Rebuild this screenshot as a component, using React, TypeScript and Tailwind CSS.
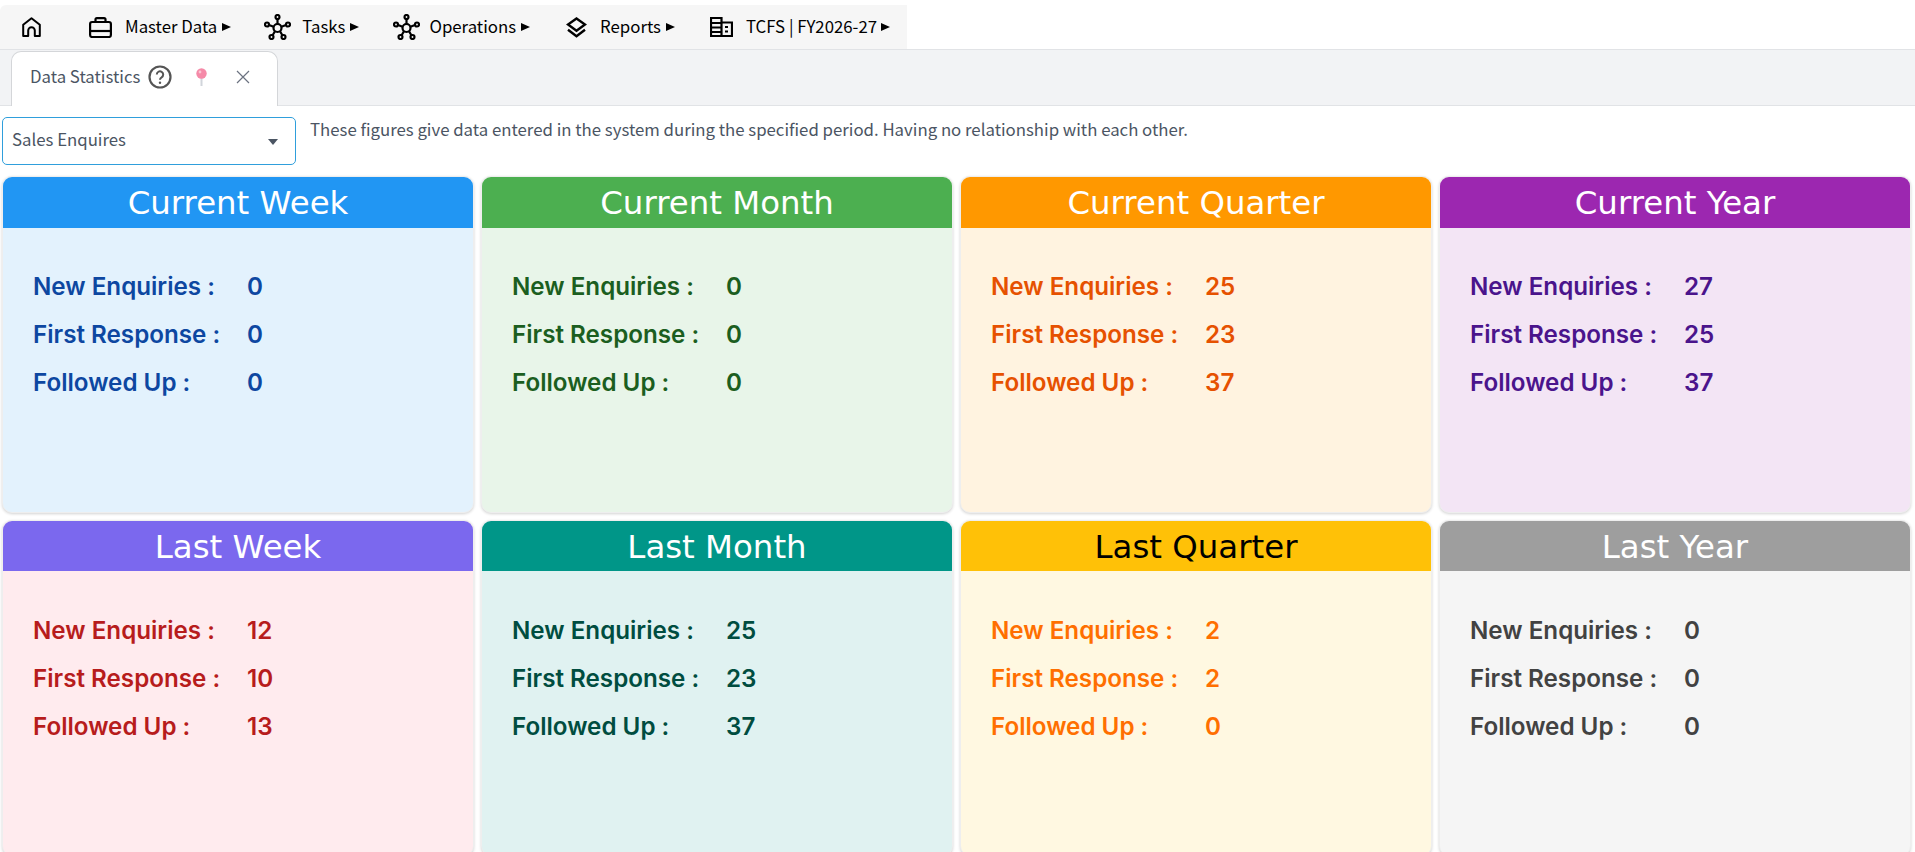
const navItems = [
  { label: "Master Data", icon: "case", left: "ml-[48px]", gap: "gap-[13px]", after: "ml-[5px]" },
  { label: "Tasks", icon: "hub", left: "ml-[33px]", gap: "gap-[11px]", after: "ml-[5px]" },
  { label: "Operations", icon: "hub", left: "ml-[34px]", gap: "gap-[9px]", after: "ml-[5px]" },
  { label: "Reports", icon: "layers", left: "ml-[36px]", gap: "gap-[13px]", after: "ml-[5px]" },
  { label: "TCFS | FY2026-27", icon: "building", left: "ml-[35px]", gap: "gap-[13px]", after: "ml-[4px]" },
];

const cards = [
  { title: "Current Week", head: "bg-[#2196f3]", titleText: "text-white", body: "bg-[#e3f2fd]", text: "text-[#0d47a1]", values: [0, 0, 0] },
  { title: "Current Month", head: "bg-[#4caf50]", titleText: "text-white", body: "bg-[#e8f5e9]", text: "text-[#1b5e20]", values: [0, 0, 0] },
  { title: "Current Quarter", head: "bg-[#ff9800]", titleText: "text-white", body: "bg-[#fff3e0]", text: "text-[#e65100]", values: [25, 23, 37] },
  { title: "Current Year", head: "bg-[#9c27b0]", titleText: "text-white", body: "bg-[#f3e5f5]", text: "text-[#4a148c]", values: [27, 25, 37] },
  { title: "Last Week", head: "bg-[#7b68ee]", titleText: "text-white", body: "bg-[#ffebee]", text: "text-[#b71c1c]", values: [12, 10, 13] },
  { title: "Last Month", head: "bg-[#009688]", titleText: "text-white", body: "bg-[#e0f2f1]", text: "text-[#004d40]", values: [25, 23, 37] },
  { title: "Last Quarter", head: "bg-[#ffc107]", titleText: "text-black", body: "bg-[#fff8e1]", text: "text-[#ff6f00]", values: [2, 2, 0] },
  { title: "Last Year", head: "bg-[#9e9e9e]", titleText: "text-white", body: "bg-[#f5f5f5]", text: "text-[#424242]", values: [0, 0, 0] },
];

const rowLabels = ["New Enquiries :", "First Response :", "Followed Up :"];

function NavIcon({ name }: { name: string }) {
  if (name === "case") {
    return (
      <svg width="23" height="21" viewBox="0 0 23 21" fill="none" stroke="#000" strokeWidth="2.2" className="block">
        <rect x="1.100" y="5" width="20.800" height="15" rx="2" />
        <path d="M6.500 5V2.500a1.400 1.400 0 0 1 1.400-1.400h7.200a1.400 1.400 0 0 1 1.400 1.400V5" />
        <path d="M1.100 14h20.800" />
      </svg>
    );
  }
  if (name === "hub") {
    return (
      <svg width="27" height="26" viewBox="0 0 27 26" fill="none" stroke="#000" strokeWidth="2.200" className="block">
        <circle cx="13.500" cy="14" r="4" />
        <circle cx="13.500" cy="3" r="2" />
        <circle cx="3" cy="10.500" r="2" />
        <circle cx="24" cy="10.500" r="2" />
        <circle cx="7.500" cy="23" r="2" />
        <circle cx="19.500" cy="23" r="2" />
        <path d="M13.500 5V10M5 11 9.600 12.800M22 11 17.400 12.800M8.600 21.300 11 17.300M18.400 21.300 16 17.300" />
      </svg>
    );
  }
  if (name === "layers") {
    return (
      <svg width="21" height="21" viewBox="0 0 21 21" fill="none" stroke="#000" strokeWidth="2.400" strokeLinejoin="miter" className="block">
        <path d="M10.500 1.500 19 7.500l-8.500 6.300L2 7.500z" />
        <path d="M2 12.800 10.500 19.300 19 12.800" />
      </svg>
    );
  }
  if (name === "building") {
    return (
      <svg width="23" height="20" viewBox="0 0 23 20" fill="none" stroke="#000" strokeWidth="2.200" className="block">
        <path d="M1 19V1h10.500v18zM11.500 5.500H22V19H1" />
        <path d="M1 6h10.500M1 10.500h10.500M1 15h10.500M15 10h3M15 14.500h3" />
      </svg>
    );
  }
  return null;
}

function StatCard({ card }: { card: (typeof cards)[number] }) {
  return (
    <div className={`${card.body} h-[336.700px] rounded-[10px] overflow-hidden border border-[#eeeeee] shadow-[0_1px_3px_rgba(0,0,0,0.18)]`}>
      <div className={`${card.head} ${card.titleText} h-[50.500px] pt-[2px] flex items-center justify-center text-[32.400px] font-['DejaVu_Sans',sans-serif]`}>
        {card.title}
      </div>
      <div className="pt-[45.500px] pl-[30px] flex flex-col gap-[19px]">
        {rowLabels.map((label, i) => (
          <div key={label} className={`${card.text} flex h-[29px] items-center text-[24.200px] font-semibold font-['Inter',sans-serif]`}>
            <span className="w-[214px]">{label}</span>
            <span>{card.values[i]}</span>
          </div>
        ))}
      </div>
    </div>
  );
}

export default function App() {
  return (
    <div className="w-[1915px] h-[852px] overflow-hidden bg-white font-['Noto_Sans_CJK_SC','Noto_Sans',sans-serif]">
      <div className="pt-[5px]">
        <nav className="w-[907px] h-[44px] bg-[#f6f6f6] rounded-tl-[6px] flex items-center text-[16.800px] text-black">
          <span className="ml-[22px]">
            <svg width="19" height="20" viewBox="0 0 19 20" fill="none" stroke="#000" strokeWidth="2" strokeLinejoin="round" className="block">
              <path d="M1.200 19V7.800L9.500 1.300l8.300 6.500V19h-5v-5.500a3.300 3.300 0 0 0-6.600 0V19z" />
            </svg>
          </span>
          {navItems.map((item) => (
            <div key={item.label} className={`flex items-center ${item.left} ${item.gap}`}>
              <NavIcon name={item.icon} />
              <span className="flex items-center">
                {item.label}
                <span className={`${item.after} w-0 h-0 border-y-[4.500px] border-y-transparent border-l-[9px] border-l-black`} />
              </span>
            </div>
          ))}
        </nav>
      </div>

      <div className="h-[57px] bg-[#f2f3f5] border-y border-[#e1e3e6] flex items-end pl-[11px]">
        <div className="w-[267px] h-[55px] -mb-px pb-[4px] bg-white border border-b-0 border-[#d4d6d9] rounded-t-[10px] flex items-center pl-[18px] text-[#4b5563] text-[16.800px]">
          <span>Data Statistics</span>
          <svg width="24" height="24" viewBox="0 0 24 24" fill="none" stroke="#555" strokeWidth="2.200" className="ml-[8px] block">
            <circle cx="12" cy="12" r="10.500" />
            <path d="M8.800 9.500a3.200 3.200 0 1 1 4.800 2.800c-1 .6-1.600 1.200-1.600 2.400" strokeWidth="2" />
            <circle cx="12" cy="17.800" r="1.200" fill="#555" stroke="none" />
          </svg>
          <svg width="11" height="18" viewBox="0 0 11 18" className="ml-[24px] block">
            <path d="M5.500 8v10" stroke="#d1d5db" strokeWidth="2" />
            <circle cx="5.500" cy="5.500" r="5.200" fill="#f58aa8" />
            <circle cx="4" cy="4" r="1.400" fill="#fbc4d2" />
          </svg>
          <svg width="14" height="14" viewBox="0 0 14 14" stroke="#6b7280" strokeWidth="1.200" className="ml-[29px] block">
            <path d="M1 1l12 12M13 1 1 13" />
          </svg>
        </div>
      </div>

      <div className="flex items-start pl-[2px] pt-[11px] h-[70px]">
        <div className="w-[294px] h-[48px] pb-[2px] border border-[#2f9fdc] rounded-[5px] flex items-center justify-between pl-[9px] pr-[17px] text-[16.800px] text-[#4b5563]">
          <span>Sales Enquires</span>
          <span className="w-0 h-0 mt-[3px] border-x-[5px] border-x-transparent border-t-[6px] border-t-[#4b5563]" />
        </div>
        <p className="ml-[14px] text-[16.800px] leading-[24px] text-[#4b5563]">
          These figures give data entered in the system during the specified period. Having no relationship with each other.
        </p>
      </div>

      <div className="grid grid-cols-[repeat(4,472px)] gap-x-[7px] gap-y-[7px] pl-[2px]">
        {cards.map((card) => (
          <StatCard key={card.title} card={card} />
        ))}
      </div>
    </div>
  );
}
